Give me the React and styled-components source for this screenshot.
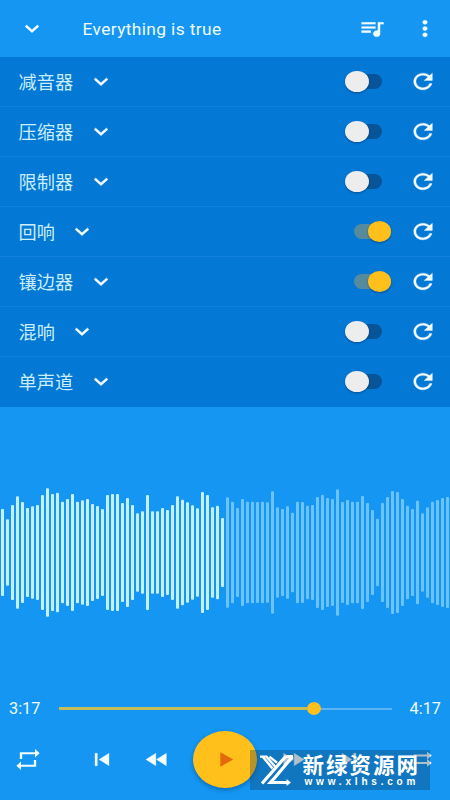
import React from "react";
import styled, { createGlobalStyle } from "styled-components";

const GlobalStyle = createGlobalStyle`
  * { box-sizing: border-box; }
  html, body { margin: 0; padding: 0; }
  body { background: #1496f2; overflow: hidden; }
`;

const Screen = styled.main`
  position: relative;
  display: flex;
  flex-direction: column;
  width: 450px;
  height: 800px;
  overflow: hidden;
  background: #1496f2;
  color: #effbff;
  font-family: Roboto, "Noto Sans CJK SC", sans-serif;
`;

const Header = styled.header`
  display: flex;
  align-items: center;
  flex: 0 0 57px;
  padding: 0 11.5px 0 18px;
`;

const Title = styled.h1`
  flex: 1;
  margin: 0 0 0 36.5px;
  font-size: 17.4px;
  font-weight: 400;
  letter-spacing: 0.36px;
  line-height: 24px;
`;

const IconButton = styled.button`
  display: flex;
  align-items: center;
  justify-content: center;
  width: 28px;
  height: 25px;
  margin-left: ${(p) => p.$gap || 0}px;
  padding: 0;
  border: 0;
  background: none;
  color: #f4fdff;
`;

const Glyph = styled.svg`
  display: block;
  width: 28px;
  height: 25px;
  fill: currentColor;
  stroke: currentColor;
  stroke-width: ${(p) => p.$weight || 0};
`;

const EffectList = styled.section`
  flex: 0 0 350px;
  background: #0378d4;
`;

const EffectRow = styled.div`
  display: flex;
  align-items: center;
  height: 50px;
  padding: 0 13.5px 0 18.5px;
  border-bottom: 1px solid ${(p) => (p.$last ? "transparent" : "#1080da")};
`;

const EffectName = styled.span`
  padding-top: 2px;
  color: #c9eeff;
  font-size: 18.2px;
  line-height: 26px;
`;

const Toggle = styled.span`
  display: flex;
  align-items: center;
  justify-content: ${(p) => (p.$on ? "flex-end" : "flex-start")};
  width: 46px;
  height: 22px;
  margin-left: auto;
`;

const Track = styled.span`
  display: flex;
  align-items: center;
  justify-content: ${(p) => (p.$on ? "flex-end" : "flex-start")};
  width: 37px;
  height: 15px;
  border-radius: 8px;
  background: ${(p) => (p.$on ? "#568b9d" : "#075598")};
`;

const Knob = styled.span`
  flex: none;
  width: 23.5px;
  height: 21px;
  border-radius: 50%;
  background: ${(p) => (p.$on ? "#ffc01c" : "#ededed")};
  box-shadow: 0 1px 2px rgba(0, 25, 60, 0.4);
`;

const WaveArea = styled.section`
  flex: 0 0 290px;
  padding-top: 73px;
`;

const Wave = styled.svg`
  display: block;
  width: 450px;
  height: 145px;
`;

const Seek = styled.div`
  display: flex;
  align-items: center;
  flex: 0 0 22px;
  padding: 0 9px;
`;

const Time = styled.span`
  width: 49.5px;
  padding-top: 1px;
  font-size: 16.3px;
  line-height: 22px;
  text-align: ${(p) => p.$align || "left"};
`;

const SeekTrack = styled.div`
  display: flex;
  align-items: center;
  width: 333px;
  height: 2px;
  background: #5bb5f5;
`;

const SeekFill = styled.div`
  flex: 0 0 248px;
  height: 3px;
  background: #c3bd5c;
`;

const SeekKnob = styled.div`
  flex: none;
  width: 14px;
  height: 13px;
  border-radius: 50%;
  background: #ffc01c;
`;

const Controls = styled.nav`
  display: flex;
  align-items: center;
  flex: 0 0 79px;
  padding: 0 13px 0 13.5px;
`;

const PlayButton = styled.button`
  display: flex;
  align-items: center;
  justify-content: center;
  flex: none;
  width: 64px;
  height: 57px;
  margin-left: 22px;
  padding: 0;
  border: 0;
  border-radius: 50%;
  background: #ffc01c;
  color: #e46a0c;
  box-shadow: 0 2px 4px rgba(0, 40, 90, 0.4);
`;

const Watermark = styled.aside`
  position: absolute;
  left: 250px;
  top: 750px;
  display: flex;
  width: 180px;
  height: 40px;
  padding: 3px 0 0 9px;
  background: rgba(12, 40, 70, 0.29);
  color: #fff;
`;

const Logo = styled.svg`
  display: block;
  flex: none;
  width: 37px;
  height: 32px;
  margin-top: 1px;
  fill: none;
  stroke: currentColor;
  stroke-width: 3.2;
`;

const WatermarkText = styled.div`
  display: flex;
  flex-direction: column;
  margin-left: 6.5px;
`;

const SiteName = styled.strong`
  font-family: "Noto Sans CJK SC", sans-serif;
  font-size: 21.5px;
  font-weight: 700;
  letter-spacing: 2px;
  line-height: 22px;
  height: 22px;
  white-space: nowrap;
`;

const SiteUrl = styled.span`
  margin: 1px 0 0 2px;
  font-family: "Liberation Sans", sans-serif;
  font-size: 10px;
  font-weight: 700;
  letter-spacing: 3.8px;
  line-height: 11px;
  white-space: nowrap;
`;

const PATHS = {
  expand: "M16.59 8.59 12 13.17 7.41 8.59 6 10l6 6 6-6z",
  queue:
    "M15 6H3v2h12V6zm0 4H3v2h12v-2zM3 16h8v-2H3v2zM17 6v8.18c-.31-.11-.65-.18-1-.18-1.66 0-3 1.34-3 3s1.34 3 3 3 3-1.34 3-3V8h3V6h-5z",
  more:
    "M12 8c1.1 0 2-.9 2-2s-.9-2-2-2-2 .9-2 2 .9 2 2 2zm0 2c-1.1 0-2 .9-2 2s.9 2 2 2 2-.9 2-2-.9-2-2-2zm0 6c-1.1 0-2 .9-2 2s.9 2 2 2 2-.9 2-2-.9-2-2-2z",
  refresh:
    "M17.65 6.35C16.2 4.9 14.21 4 12 4c-4.42 0-7.99 3.58-7.99 8s3.57 8 7.99 8c3.73 0 6.84-2.55 7.73-6h-2.08c-.82 2.33-3.04 4-5.65 4-3.31 0-6-2.69-6-6s2.69-6 6-6c1.66 0 3.14.69 4.22 1.78L13 11h7V4l-2.35 2.35z",
  repeat: "M5 5h13V2l4 4-4 4V7H7v4.500H5zM19 19H6v3l-4-4 4-4v3h11v-4.500h2z",
  previous: "M6 6h2v12H6zm3.500 6 8.500 6V6z",
  rewind: "M11 18V6l-8.500 6 8.500 6zm.5-6 8.500 6V6l-8.500 6z",
  play: "M8 5v14l11-7z",
  forward: "m4 18 8.500-6L4 6v12zm9-12v12l8.500-6L13 6z",
  next: "m6 18 8.500-6L6 6v12zM16 6v12h2V6h-2z",
  order:
    "M4 7.300h11.500V4.500L19.500 8.200l-4 3.700V9.200H4zM4 14.400h11.500v-2.800l4 3.700-4 3.700v-2.700H4z",
};

const Icon = ({ name, weight = 0.3 }) => (
  <Glyph $weight={weight} viewBox="0 0 24 24" preserveAspectRatio="none" aria-hidden="true">
    <path d={PATHS[name]} />
  </Glyph>
);

const EFFECTS = [
  { name: "减音器", on: false },
  { name: "压缩器", on: false },
  { name: "限制器", on: false },
  { name: "回响", on: true },
  { name: "镶边器", on: true },
  { name: "混响", on: false },
  { name: "单声道", on: false },
];

const PLAYED_BARS = 45;
// Distance of each bar's tip from the top of the wave, in thirds of a pixel.
const TIPS = [
  87, 118, 75, 49, 66, 84, 79, 75, 45, 25, 42, 38, 65, 57, 42, 65, 61, 57, 72, 78, 87, 45, 42, 42, 69, 54, 75, 100, 94, 45,
  94, 94, 84, 90, 75, 49, 59, 67, 76, 85, 36, 45, 82, 77, 114, 52, 65, 84, 57, 65, 65, 66, 65, 67, 34, 82, 87, 79, 98, 65,
  66, 77, 75, 51, 45, 54, 57, 28, 66, 60, 65, 65, 48, 69, 90, 116, 69, 51, 33, 36, 57, 77, 87, 62, 100, 82, 65, 60, 54, 51,
];

const Waveform = () => (
  <Wave viewBox="0 0 450 145">
    {TIPS.map((tip, i) => (
      <rect
        key={i}
        x={i * 5 + 1}
        y={tip / 3}
        width="3"
        height={145 - (2 * tip) / 3}
        rx="1"
        fill={i < PLAYED_BARS ? "#c4f1ff" : "#6bc3fb"}
      />
    ))}
  </Wave>
);

export default function App() {
  return (
    <Screen>
      <GlobalStyle />
      <Header>
        <IconButton aria-label="Collapse"><Icon name="expand" /></IconButton>
        <Title>Everything is true</Title>
        <IconButton aria-label="Queue"><Icon name="queue" weight={0.15} /></IconButton>
        <IconButton $gap={25} aria-label="More"><Icon name="more" /></IconButton>
      </Header>
      <EffectList>
        {EFFECTS.map(({ name, on }, i) => (
          <EffectRow key={name} $last={i === EFFECTS.length - 1}>
            <EffectName>{name}</EffectName>
            <IconButton $gap={13.5} aria-label="Expand"><Icon name="expand" /></IconButton>
            <Toggle $on={on}>
              <Track $on={on}><Knob $on={on} /></Track>
            </Toggle>
            <IconButton $gap={17.5} aria-label="Reset"><Icon name="refresh" /></IconButton>
          </EffectRow>
        ))}
      </EffectList>
      <WaveArea><Waveform /></WaveArea>
      <Seek>
        <Time>3:17</Time>
        <SeekTrack><SeekFill /><SeekKnob /></SeekTrack>
        <Time $align="right">4:17</Time>
      </Seek>
      <Controls>
        <IconButton aria-label="Repeat"><Icon name="repeat" weight={0} /></IconButton>
        <IconButton $gap={46} aria-label="Previous"><Icon name="previous" /></IconButton>
        <IconButton $gap={27.5} aria-label="Rewind"><Icon name="rewind" /></IconButton>
        <PlayButton aria-label="Play"><Icon name="play" weight={0} /></PlayButton>
        <IconButton $gap={22} aria-label="Forward"><Icon name="forward" /></IconButton>
        <IconButton $gap={28} aria-label="Next"><Icon name="next" /></IconButton>
        <IconButton $gap={45.5} aria-label="Play order"><Icon name="order" weight={0} /></IconButton>
      </Controls>
      <Watermark>
        <Logo viewBox="0 0 37 32">
          <path d="M1 2.600h6.500L16 12.500M4 3l9.500 11.500M10.500 2.600l7.500 6" strokeWidth="2.400" />
          <path d="M27 2 3 29.500M34 2.600h-6.500M33.500 2.600 16 23.500l-4.500 5H29" />
          <path d="m27.500 25 4.500 3.500-4.500 3.500z" fill="currentColor" stroke="none" />
        </Logo>
        <WatermarkText>
          <SiteName>新绿资源网</SiteName>
          <SiteUrl>www.xlhs.com</SiteUrl>
        </WatermarkText>
      </Watermark>
    </Screen>
  );
}
